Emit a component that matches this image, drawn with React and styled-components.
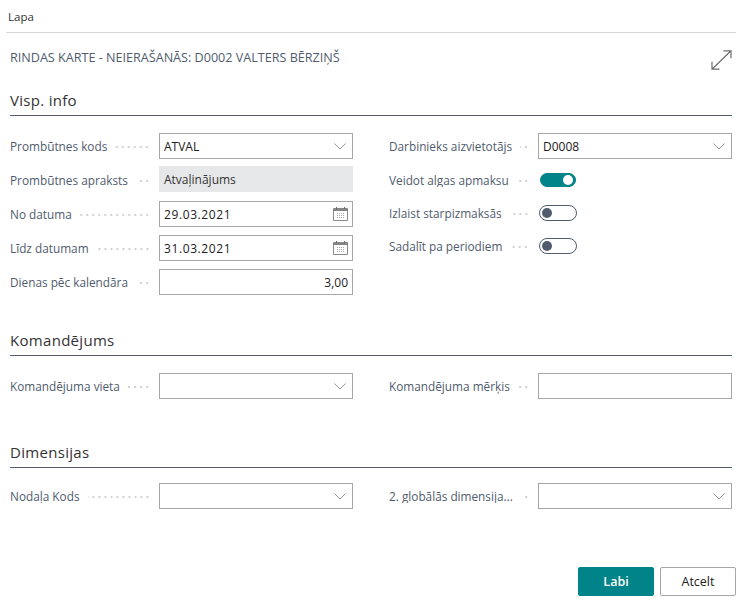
import React from "react";
import styled, { createGlobalStyle } from "styled-components";

const GlobalStyle = createGlobalStyle`
  html, body {
    margin: 0;
    padding: 0;
    background: #fff;
  }
  body {
    font-family: "Open Sans", "Noto Sans", "Liberation Sans", sans-serif;
    font-size: 12px;
    color: #212121;
  }
`;

const Chevron = () => (
  <svg width="12" height="7" viewBox="0 0 12 7" fill="none">
    <path d="M.5.5 6 6 11.500.5" stroke="#7a7a7a" strokeWidth="0.8" />
  </svg>
);

const CalendarIcon = () => (
  <svg width="15" height="14" viewBox="0 0 15 14" fill="none">
    <path d="M0.5 1.5h14v12h-14z" stroke="#8a8a8a" strokeWidth="1" />
    <path d="M0.5 3h14" stroke="#666" strokeWidth="1.6" />
    <path d="M3.5 0v2M11.500 0v2" stroke="#666" strokeWidth="1" />
    <path
      d="M4 6.5h7M4 8.500h7M4 10.500h7"
      stroke="#a8a8a8"
      strokeWidth="1"
      strokeDasharray="1 1"
    />
  </svg>
);

const ExpandIcon = () => (
  <ExpandSvg width="21" height="20" viewBox="0 0 21 20" fill="none">
    <path
      d="M20 .8 1 19.200M12.500.8H20v7.400M1 11.800v7.400h7.500"
      stroke="#6e6e6e"
      strokeWidth="1.2"
    />
  </ExpandSvg>
);

const Field = ({ label, clip, compact, children }) => (
  <FieldRow $compact={compact}>
    <Caption>
      <CaptionText $clip={clip}>{label}</CaptionText>
      <Leader />
    </Caption>
    {children}
  </FieldRow>
);

const Select = ({ value }) => (
  <InputBox>
    <InputText>{value}</InputText>
    <IconSlot>
      <Chevron />
    </IconSlot>
  </InputBox>
);

const DateInput = ({ value }) => (
  <InputBox>
    <InputText $date>{value}</InputText>
    <IconSlot>
      <CalendarIcon />
    </IconSlot>
  </InputBox>
);

export default function App() {
  return (
    <>
      <GlobalStyle />
      <Page>
        <TopBar>Lapa</TopBar>
        <Body>
          <TitleRow>
            <PageTitle>RINDAS KARTE - NEIERAŠANĀS: D0002 VALTERS BĒRZIŅŠ</PageTitle>
            <ExpandIcon />
          </TitleRow>

          <Section>
            <SectionTitle>Visp. info</SectionTitle>
            <Columns>
              <Column>
                <Field label="Prombūtnes kods">
                  <Select value="ATVAL" />
                </Field>
                <Field label="Prombūtnes apraksts">
                  <ReadOnlyBox>Atvaļinājums</ReadOnlyBox>
                </Field>
                <Field label="No datuma">
                  <DateInput value="29.03.2021" />
                </Field>
                <Field label="Līdz datumam">
                  <DateInput value="31.03.2021" />
                </Field>
                <Field label="Dienas pēc kalendāra">
                  <InputBox>
                    <InputText $right>3,00</InputText>
                  </InputBox>
                </Field>
              </Column>
              <Column>
                <Field label="Darbinieks aizvietotājs">
                  <Select value="D0008" />
                </Field>
                <Field label="Veidot algas apmaksu" clip compact>
                  <Toggle $on />
                </Field>
                <Field label="Izlaist starpizmaksās" compact>
                  <Toggle />
                </Field>
                <Field label="Sadalīt pa periodiem" compact>
                  <Toggle />
                </Field>
              </Column>
            </Columns>
          </Section>

          <Section $top={35}>
            <SectionTitle>Komandējums</SectionTitle>
            <Columns>
              <Column>
                <Field label="Komandējuma vieta">
                  <Select value="" />
                </Field>
              </Column>
              <Column>
                <Field label="Komandējuma mērķis">
                  <InputBox />
                </Field>
              </Column>
            </Columns>
          </Section>

          <Section $top={43}>
            <SectionTitle $tight>Dimensijas</SectionTitle>
            <Columns>
              <Column>
                <Field label="Nodaļa Kods" clip>
                  <Select value="" />
                </Field>
              </Column>
              <Column>
                <Field label="2. globālās dimensija..." clip>
                  <Select value="" />
                </Field>
              </Column>
            </Columns>
          </Section>
        </Body>
        <Footer>
          <Button $primary>Labi</Button>
          <Button>Atcelt</Button>
        </Footer>
      </Page>
    </>
  );
}

const Page = styled.div`
  width: 747px;
  height: 607px;
  overflow: hidden;
  display: flex;
  flex-direction: column;
`;

const TopBar = styled.div`
  margin: 0 11px 0 6px;
  padding: 0 0 0 2px;
  height: 32px;
  line-height: 34px;
  font-size: 11.5px;
  color: #333;
  border-bottom: 1px solid #d6d6dc;
`;

const Body = styled.div`
  flex: 1;
  padding: 0 15px 0 10px;
`;

const TitleRow = styled.div`
  display: flex;
  justify-content: space-between;
  align-items: flex-start;
  height: 20px;
  margin-top: 16px;
`;

const ExpandSvg = styled.svg`
  margin-top: 1px;
`;

const PageTitle = styled.div`
  font-size: 12.6px;
  color: #505c6d;
  line-height: 17px;
`;

const Section = styled.section`
  margin-top: ${(p) => p.$top ?? 21}px;
`;

const SectionTitle = styled.h2`
  margin: 0 0 ${(p) => (p.$tight ? 15 : 17)}px;
  height: 25px;
  line-height: 21px;
  font-size: 15px;
  font-weight: 500;
  letter-spacing: 0.3px;
  color: #333;
  border-bottom: 1px solid #505c6d;
`;

const Columns = styled.div`
  display: grid;
  grid-template-columns: 343px 343px;
  column-gap: 36px;
`;

const Column = styled.div`
  display: flex;
  flex-direction: column;
  gap: 8px;
`;

const FieldRow = styled.div`
  display: flex;
  align-items: center;
  height: ${(p) => (p.$compact ? 25 : 26)}px;
`;

const Caption = styled.div`
  width: 149px;
  flex: none;
  display: flex;
  align-items: center;
  color: #505c6d;
  font-size: 11.8px;
`;

const CaptionText = styled.span`
  white-space: nowrap;
  ${(p) =>
    p.$clip &&
    `
    height: 14px;
    line-height: 14px;
    overflow: hidden;
  `}
`;

const Leader = styled.span`
  flex: 1;
  height: 2px;
  margin: 2px 9px 0 8px;
  background-image: radial-gradient(circle, #cfd1d5 0.7px, transparent 1px);
  background-size: 6px 2px;
  background-position: right center;
  background-repeat: repeat-x;
`;

const InputBox = styled.div`
  box-sizing: border-box;
  flex: none;
  width: 194px;
  height: 26px;
  display: flex;
  align-items: center;
  padding: 0 4px;
  background: #fff;
  border: 1px solid #a6a6a6;
`;

const InputText = styled.span`
  flex: 1;
  text-align: ${(p) => (p.$right ? "right" : "left")};
  letter-spacing: ${(p) => (p.$date ? "0.6px" : "0")};
  color: #212121;
`;

const IconSlot = styled.span`
  display: flex;
  width: 16px;
  justify-content: center;
`;

const ReadOnlyBox = styled.div`
  box-sizing: border-box;
  flex: none;
  width: 194px;
  height: 26px;
  margin-top: -2px;
  line-height: 28px;
  padding: 0 5px;
  background: #e6e7e9;
  color: #333;
`;

const Toggle = styled.span`
  box-sizing: border-box;
  position: relative;
  display: block;
  width: ${(p) => (p.$on ? 36 : 38)}px;
  height: ${(p) => (p.$on ? 14 : 16)}px;
  margin-left: ${(p) => (p.$on ? 2 : 1)}px;
  border-radius: 8px;
  border: 1px solid ${(p) => (p.$on ? "#008489" : "#505c6d")};
  background: ${(p) => (p.$on ? "#008489" : "#fff")};

  &::after {
    content: "";
    position: absolute;
    top: ${(p) => (p.$on ? 1 : 2)}px;
    ${(p) => (p.$on ? "right: 2px;" : "left: 2px;")}
    width: 10px;
    height: 10px;
    border-radius: 50%;
    background: ${(p) => (p.$on ? "#fff" : "#505c6d")};
  }
`;

const Footer = styled.footer`
  display: flex;
  justify-content: flex-end;
  gap: 6px;
  padding: 0 11px 11px 0;
`;

const Button = styled.button`
  box-sizing: border-box;
  width: 76px;
  height: 29px;
  padding: 0;
  font-family: inherit;
  font-size: 12.5px;
  font-weight: ${(p) => (p.$primary ? 600 : 400)};
  color: ${(p) => (p.$primary ? "#fff" : "#212121")};
  background: ${(p) => (p.$primary ? "#008489" : "#fff")};
  border: 1px solid ${(p) => (p.$primary ? "#008489" : "#a6a6a6")};
  border-radius: 2px;
`;
